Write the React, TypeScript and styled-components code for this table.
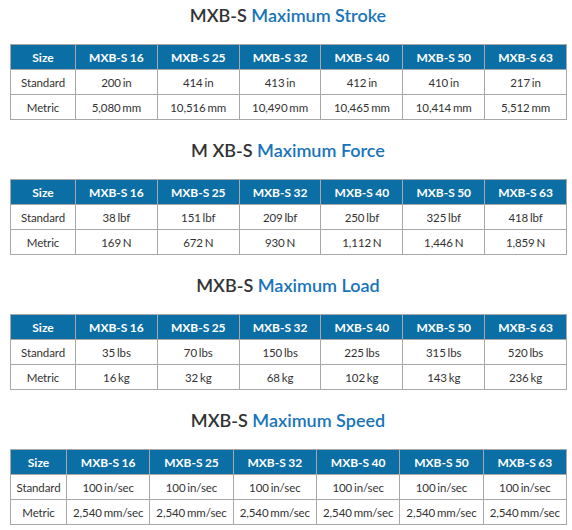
import React from "react";
import styled, { createGlobalStyle } from "styled-components";

const Global = createGlobalStyle`
  html, body { margin: 0; padding: 0; background: #ffffff; }
  body { font-family: Lato, "Open Sans", sans-serif; color: #333333; }
`;

const Page = styled.div`
  width: 556px;
  margin-left: 10px;
  display: flex;
  flex-direction: column;
  gap: 15px;
`;

const Section = styled.section`
  display: flex;
  flex-direction: column;
  gap: 14px;
`;

const Title = styled.h2`
  margin: 0;
  height: 30px;
  line-height: 30px;
  text-align: center;
  font-size: 18px;
  font-weight: 600;
  color: #333333;
`;

const Accent = styled.span`
  color: #1874b9;
`;

const Table = styled.table`
  width: 556px;
  border-collapse: collapse;
  table-layout: fixed;
  border: 1px solid #a8a8a8;
`;

const HeadCell = styled.th`
  background: #0b6ea5;
  color: #ffffff;
  font-weight: 700;
  font-size: 12px;
  word-spacing: -0.5px;
  height: 24px;
  padding: 0;
  text-align: center;
  border: 1px solid #a8a8a8;
`;

const Cell = styled.td`
  font-size: 11.5px;
  letter-spacing: -0.1px;
  word-spacing: -1px;
  color: #333333;
  height: 24px;
  padding: 0;
  text-align: center;
  border: 1px solid #a8a8a8;
  white-space: nowrap;
`;

type Spec = {
  prefix: string;
  accent: string;
  first: number;
  standard: string[];
  metric: string[];
};

const sizes = ["MXB-S 16", "MXB-S 25", "MXB-S 32", "MXB-S 40", "MXB-S 50", "MXB-S 63"];

const specs: Spec[] = [
  {
    prefix: "MXB-S",
    accent: "Maximum Stroke",
    first: 65,
    standard: ["200 in", "414 in", "413 in", "412 in", "410 in", "217 in"],
    metric: ["5,080 mm", "10,516 mm", "10,490 mm", "10,465 mm", "10,414 mm", "5,512 mm"],
  },
  {
    prefix: "M XB-S",
    accent: "Maximum Force",
    first: 65,
    standard: ["38 lbf", "151 lbf", "209 lbf", "250 lbf", "325 lbf", "418 lbf"],
    metric: ["169 N", "672 N", "930 N", "1,112 N", "1,446 N", "1,859 N"],
  },
  {
    prefix: "MXB-S",
    accent: "Maximum Load",
    first: 65,
    standard: ["35 lbs", "70 lbs", "150 lbs", "225 lbs", "315 lbs", "520 lbs"],
    metric: ["16 kg", "32 kg", "68 kg", "102 kg", "143 kg", "236 kg"],
  },
  {
    prefix: "MXB-S",
    accent: "Maximum Speed",
    first: 56,
    standard: Array(6).fill("100 in/sec"),
    metric: Array(6).fill("2,540 mm/sec"),
  },
];

function SpecTable({ spec }: { spec: Spec }) {
  const rest = (556 - spec.first) / 6;
  return (
    <Section>
      <Title>
        {spec.prefix} <Accent>{spec.accent}</Accent>
      </Title>
      <Table>
        <colgroup>
          <col style={{ width: spec.first }} />
          {sizes.map((s) => (
            <col key={s} style={{ width: rest }} />
          ))}
        </colgroup>
        <thead>
          <tr>
            <HeadCell>Size</HeadCell>
            {sizes.map((s) => (
              <HeadCell key={s}>{s}</HeadCell>
            ))}
          </tr>
        </thead>
        <tbody>
          <tr>
            <Cell>Standard</Cell>
            {spec.standard.map((v, i) => (
              <Cell key={i}>{v}</Cell>
            ))}
          </tr>
          <tr>
            <Cell>Metric</Cell>
            {spec.metric.map((v, i) => (
              <Cell key={i}>{v}</Cell>
            ))}
          </tr>
        </tbody>
      </Table>
    </Section>
  );
}

export default function App() {
  return (
    <>
      <Global />
      <Page>
        {specs.map((s) => (
          <SpecTable key={s.accent} spec={s} />
        ))}
      </Page>
    </>
  );
}
